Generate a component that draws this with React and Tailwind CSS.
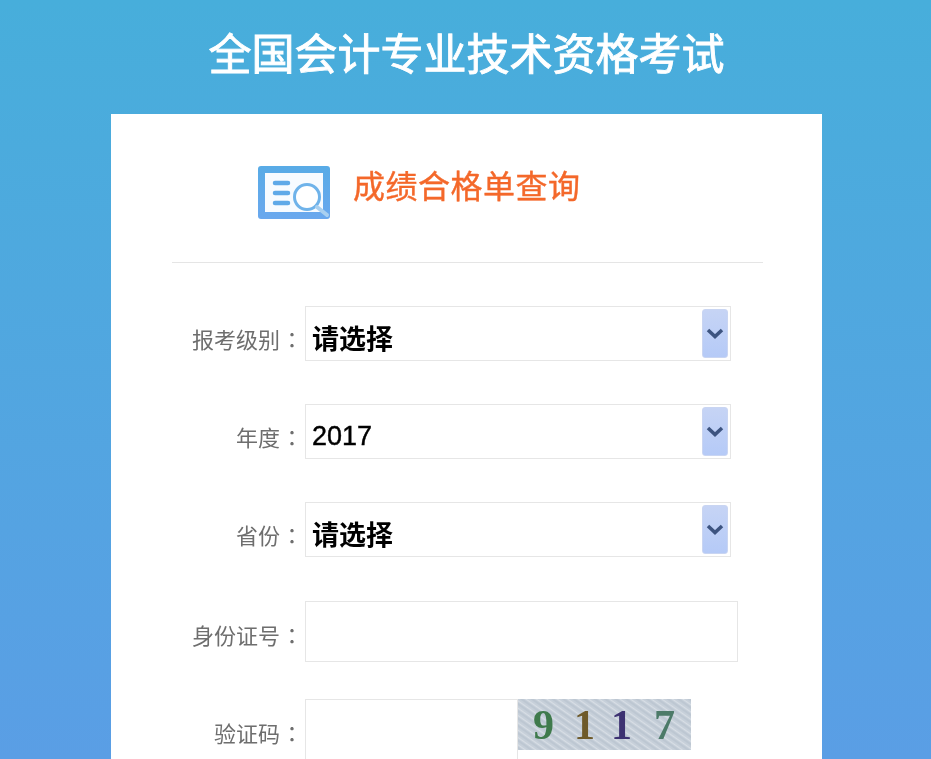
import React from 'react';

const cjk = "font-['Noto_Sans_CJK_SC','Liberation_Sans',sans-serif]";

function SelectBox({ value, bold }) {
  return (
    <div className="flex h-[55px] w-[426px] items-center justify-between border border-[#e6e6e6] bg-white pl-[6px] pr-[2px]">
      <span className={`text-black ${bold ? 'pt-[7px] text-[27px] leading-none font-bold' : "pt-[9px] font-['Liberation_Sans',sans-serif] text-[27px] leading-none [-webkit-text-stroke:0.4px_black]"}`}>{value}</span>
      <div className="flex h-[49px] w-[26px] items-start justify-center rounded-[3px] border border-[#c9d5f2] bg-gradient-to-b from-[#c6d4f5] to-[#b5caf7] pt-[17px]">
        <svg width="18" height="13" viewBox="0 0 18 13">
          <path d="M2 3 L9 9.5 L16 3" fill="none" stroke="#3d5480" strokeWidth="3.6" />
        </svg>
      </div>
    </div>
  );
}

function Label({ text, className }) {
  return (
    <label className={`w-[133px] pr-[4px] text-right text-[22px] leading-none whitespace-nowrap text-[#6e6e6e] ${className}`}>
      {text}
      <span className="ml-[1px] mr-[-2px] font-['Noto_Sans_CJK_TC',sans-serif]">：</span>
    </label>
  );
}

function Captcha() {
  return (
    <div className="relative h-[51px] w-[173px] overflow-hidden bg-[#c3cdd6]">
      <svg className="absolute inset-0" width="173" height="51">
        <defs>
          <pattern id="noise" width="6" height="6" patternUnits="userSpaceOnUse" patternTransform="rotate(35)">
            <rect width="6" height="6" fill="#c6cfd9" />
            <line x1="0" y1="1.5" x2="6" y2="1.5" stroke="#d8dee5" strokeWidth="1.2" />
            <line x1="0" y1="4" x2="6" y2="4" stroke="#b4bfcb" strokeWidth="1" />
          </pattern>
        </defs>
        <rect width="173" height="51" fill="url(#noise)" />
      </svg>
      <div className="absolute inset-0 font-['Liberation_Serif',serif] text-[42px] font-bold leading-none">
        <span className="absolute left-[15px] top-[5px] text-[#3f7a4c]">9</span>
        <span className="absolute left-[56px] top-[5px] text-[#6e5a2a]">1</span>
        <span className="absolute left-[93px] top-[5px] text-[#3d3272]">1</span>
        <span className="absolute left-[136px] top-[5px] text-[#4c7a68]">7</span>
      </div>
    </div>
  );
}

export default function App() {
  return (
    <div className={`h-[759px] overflow-hidden bg-gradient-to-b from-[#47aedb] to-[#5a9ee5] blur-[0.4px] ${cjk}`}>
      <h1 className="ml-[111px] flex h-[114px] w-[711px] items-center justify-center pb-[12px] text-[43px] font-normal leading-none whitespace-nowrap text-white [-webkit-text-stroke:0.9px_white]">
        全国会计专业技术资格考试
      </h1>

      <div className="ml-[111px] h-[645px] w-[711px] bg-white pl-[61px] pr-[59px]">
        {/* Title */}
        <div className="flex h-[149px] items-start border-b border-[#e5e5e5] pl-[86px] pt-[52px]">
          <svg width="73" height="54" viewBox="0 0 73 54" className="shrink-0">
            <defs>
              <linearGradient id="ic" x1="0" y1="0" x2="0" y2="1">
                <stop offset="0" stopColor="#58abe6" />
                <stop offset="1" stopColor="#6aa8ee" />
              </linearGradient>
            </defs>
            <rect x="0" y="0" width="72" height="53" rx="3" fill="url(#ic)" />
            <rect x="7" y="7" width="58" height="39" fill="#f7fbff" />
            <path d="M17 17h13M17 27h13M17 37h13" stroke="#5fa9e8" strokeWidth="4.5" strokeLinecap="round" />
            <circle cx="49" cy="31" r="12.5" fill="#fff" stroke="#6fb3ea" strokeWidth="3" />
            <path d="M59 41l10 8" stroke="#a9d0f0" strokeWidth="4" strokeLinecap="round" />
          </svg>
          <h2 className="ml-[22px] mt-[-4px] text-[32px] font-normal leading-[44px] tracking-[0.5px] whitespace-nowrap text-[#f4682a] [-webkit-text-stroke:0.4px_#f4682a]">成绩合格单查询</h2>
        </div>

        {/* Form */}
        <div className="flex flex-col pt-[43px]">
          <div className="mb-[43px] flex items-center">
            <Label text="报考级别" className="pt-[9px]" />
            <SelectBox value="请选择" bold />
          </div>
          <div className="mb-[43px] flex items-center">
            <Label text="年度" className="pt-[9px]" />
            <SelectBox value="2017" />
          </div>
          <div className="mb-[44px] flex items-center">
            <Label text="省份" className="pt-[9px]" />
            <SelectBox value="请选择" bold />
          </div>
          <div className="mb-[37px] flex items-center">
            <Label text="身份证号" className="pt-[4px]" />
            <input className="h-[61px] w-[433px] border border-[#e6e6e6] bg-white outline-none" />
          </div>
          <div className="flex items-start">
            <Label text="验证码" className="pt-[22px]" />
            <input className="h-[62px] w-[213px] border border-[#e6e6e6] bg-white outline-none" />
            <Captcha />
          </div>
        </div>
      </div>
    </div>
  );
}
